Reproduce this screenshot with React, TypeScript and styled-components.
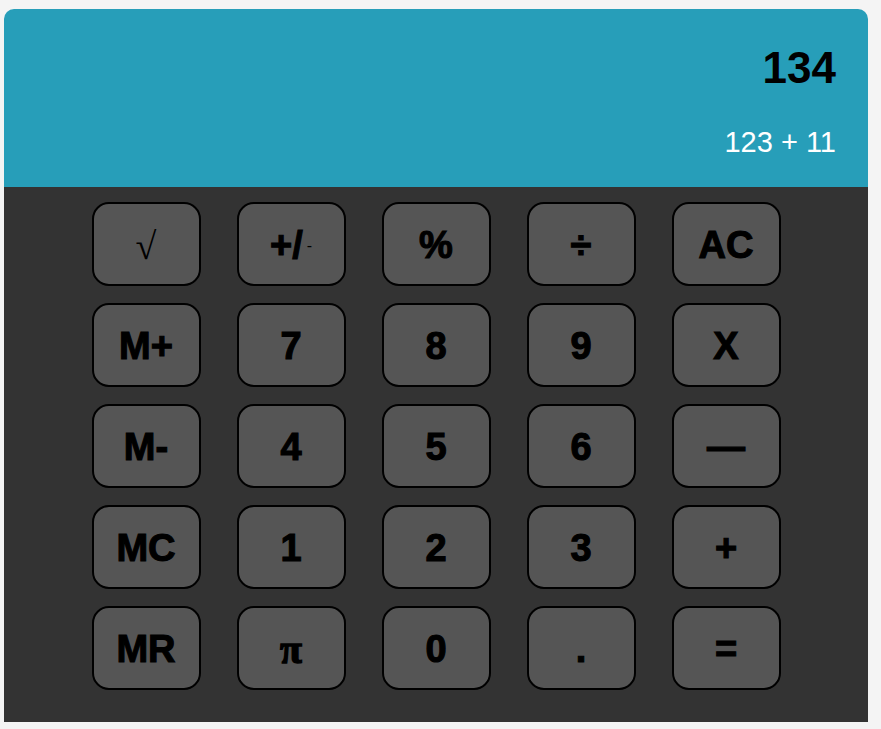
import React from "react";
import styled, { createGlobalStyle } from "styled-components";

const GlobalStyle = createGlobalStyle`
  html, body {
    margin: 0;
    background: #f4f4f4;
  }
  body {
    padding: 9px 13px 7px 4px;
    font-family: "Liberation Sans", Arial, sans-serif;
  }
  * { box-sizing: border-box; }
`;

const Calculator = styled.div`
  width: 864px;
  display: flex;
  flex-direction: column;
`;

const Display = styled.div`
  height: 178px;
  background: #279eb9;
  border-radius: 10px 10px 0 0;
  padding: 34px 32px 0 32px;
  display: flex;
  flex-direction: column;
  align-items: flex-end;
  gap: 33px;
`;

const Result = styled.div`
  font-size: 44px;
  font-weight: bold;
  color: #000;
  line-height: normal;
`;

const Expression = styled.div`
  font-size: 29px;
  color: #fff;
  line-height: normal;
`;

const Keypad = styled.div`
  background: #333333;
  padding: 15px 0 32px 0;
  display: grid;
  grid-template-columns: repeat(5, 109px);
  grid-auto-rows: 84px;
  column-gap: 36px;
  row-gap: 17px;
  justify-content: center;
`;

type Glyph = "root" | "pi";

const Key = styled.button<{ $glyph?: Glyph }>`
  width: 109px;
  height: 84px;
  background: #555555;
  border: 2px solid #000;
  border-radius: 17px;
  color: #000;
  padding: 3px 0 0 0;
  display: flex;
  align-items: center;
  justify-content: center;
  font-family: ${(p) =>
    p.$glyph ? `"Liberation Serif", "DejaVu Serif", serif` : `"Liberation Sans", Arial, sans-serif`};
  font-size: ${(p) => (p.$glyph === "pi" ? "40px" : "38px")};
  font-weight: ${(p) => (p.$glyph === "root" ? "normal" : "bold")};
  -webkit-text-stroke: ${(p) =>
    p.$glyph === "root" ? "0" : p.$glyph === "pi" ? "1.4px #000" : "1.1px #000"};
  cursor: pointer;
`;

const SmallMinus = styled.span`
  font-size: 16px;
  font-weight: normal;
  -webkit-text-stroke: 0;
  margin-left: 4px;
`;

type KeyDef = { label: React.ReactNode; glyph?: Glyph };

const keys: KeyDef[] = [
  { label: "√", glyph: "root" },
  { label: (<>+/<SmallMinus>-</SmallMinus></>) },
  { label: "%" },
  { label: "÷" },
  { label: "AC" },
  { label: "M+" },
  { label: "7" },
  { label: "8" },
  { label: "9" },
  { label: "X" },
  { label: "M-" },
  { label: "4" },
  { label: "5" },
  { label: "6" },
  { label: "—" },
  { label: "MC" },
  { label: "1" },
  { label: "2" },
  { label: "3" },
  { label: "+" },
  { label: "MR" },
  { label: "π", glyph: "pi" },
  { label: "0" },
  { label: "." },
  { label: "=" },
];

export default function App() {
  return (
    <>
      <GlobalStyle />
      <Calculator>
        <Display>
          <Result>134</Result>
          <Expression>123 + 11</Expression>
        </Display>
        <Keypad>
          {keys.map((k, i) => (
            <Key key={i} $glyph={k.glyph}>
              {k.label}
            </Key>
          ))}
        </Keypad>
      </Calculator>
    </>
  );
}
